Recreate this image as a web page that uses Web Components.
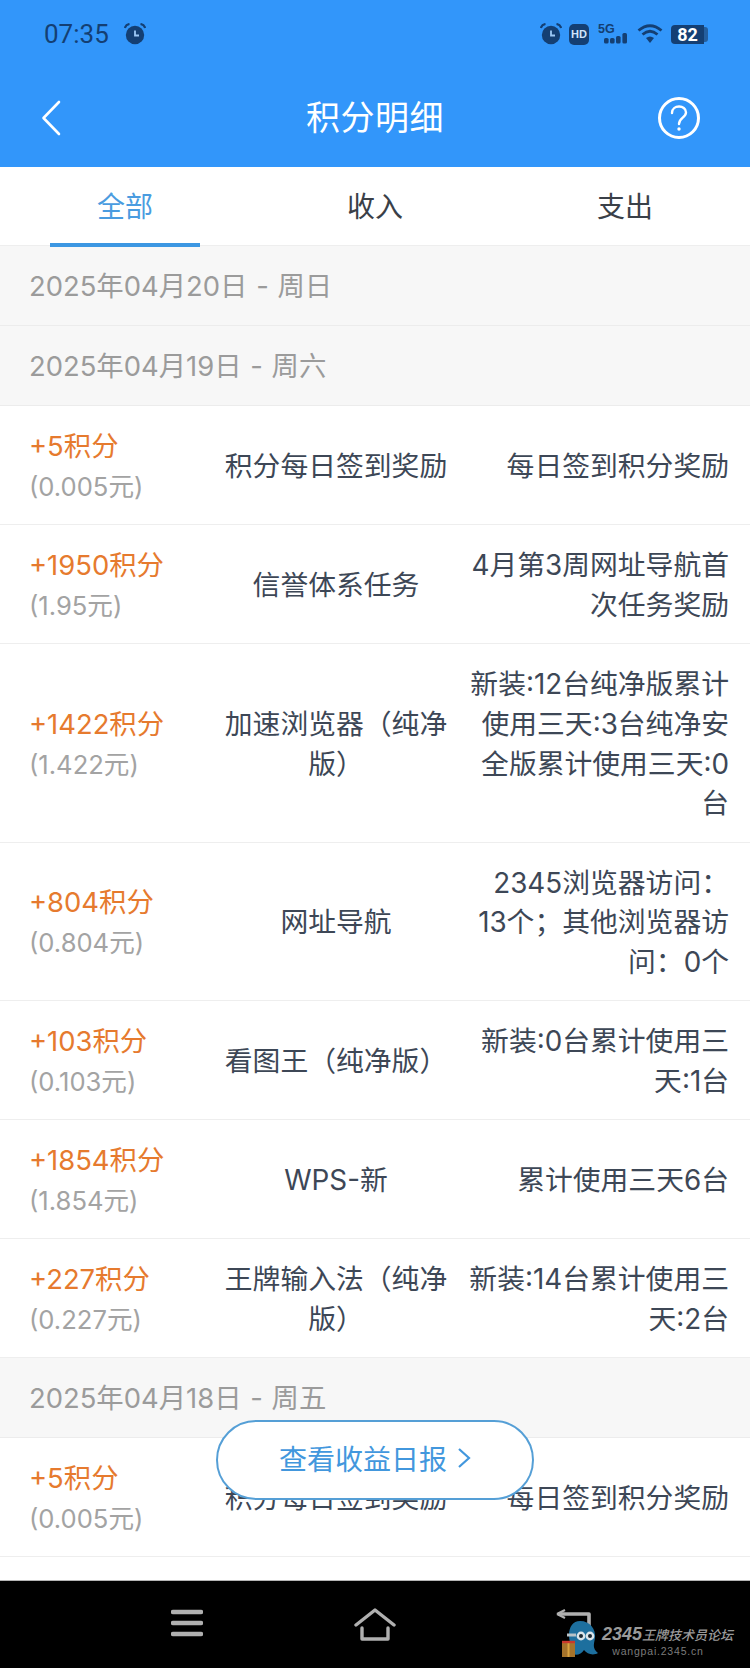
<!DOCTYPE html>
<html lang="zh">
<head>
<meta charset="utf-8">
<title>积分明细</title>
<style>
    html, body { margin: 0; padding: 0; background: #fff; }
    body { font-family: Inter, "Noto Sans CJK SC", sans-serif; }
</style>
</head>
<body>
<points-page>
    <app-header slot="top" title="积分明细"></app-header>
    <tab-bar slot="top"></tab-bar>

    <date-row>2025年04月20日 - 周日</date-row>
    <date-row>2025年04月19日 - 周六</date-row>
    <points-row><span slot="points">+5积分</span><span slot="yuan">(0.005元)</span><span slot="source">积分每日签到奖励</span>每日签到积分奖励</points-row>
    <points-row><span slot="points">+1950积分</span><span slot="yuan">(1.95元)</span><span slot="source">信誉体系任务</span>4月第3周网址导航首次任务奖励</points-row>
    <points-row><span slot="points">+1422积分</span><span slot="yuan">(1.422元)</span><span slot="source">加速浏览器（纯净版）</span>新装:12台纯净版累计使用三天:3台纯净安全版累计使用三天:0台</points-row>
    <points-row><span slot="points">+804积分</span><span slot="yuan">(0.804元)</span><span slot="source">网址导航</span>2345浏览器访问：13个；其他浏览器访问：0个</points-row>
    <points-row><span slot="points">+103积分</span><span slot="yuan">(0.103元)</span><span slot="source">看图王（纯净版）</span>新装:0台累计使用三天:1台</points-row>
    <points-row><span slot="points">+1854积分</span><span slot="yuan">(1.854元)</span><span slot="source">WPS-新</span>累计使用三天6台</points-row>
    <points-row><span slot="points">+227积分</span><span slot="yuan">(0.227元)</span><span slot="source">王牌输入法（纯净版）</span>新装:14台累计使用三天:2台</points-row>
    <date-row>2025年04月18日 - 周五</date-row>
    <points-row><span slot="points">+5积分</span><span slot="yuan">(0.005元)</span><span slot="source">积分每日签到奖励</span>每日签到积分奖励</points-row>

    <report-pill slot="over">查看收益日报</report-pill>
    <nav-bar slot="bottom"></nav-bar>
</points-page>

<script>
/**
 * Alarm clock glyph used twice in the status bar
 * @returns {string}
 */
function alarmIcon() {
    return `<svg width="22" height="22" viewBox="0 0 22 22">
        <circle cx="11" cy="12" r="9.2" fill="#143f73"/>
        <path d="M0.8 5 Q2 1.5 5.5 1 M21.2 5 Q20 1.5 16.5 1" stroke="#143f73" stroke-width="2.2" fill="none"/>
        <path d="M11 7.5 V12.5 H15" stroke="#9cc8f5" stroke-width="1.8" fill="none"/>
    </svg>`;
}

/** Whole screen: fixed top, clipped list, bottom nav */
class PointsPage extends HTMLElement {
    connectedCallback() {
        this.attachShadow({ mode: 'open' }).innerHTML = `
            <style>
                :host {
                    display: flex;
                    flex-direction: column;
                    position: relative;
                    width: 750px;
                    height: 1668px;
                    overflow: hidden;
                    background: #fff;
                }
                .list { flex: 1; min-height: 0; overflow: hidden; }
            </style>
            <slot name="top"></slot>
            <div class="list"><slot></slot></div>
            <slot name="over"></slot>
            <slot name="bottom"></slot>
        `;
    }
}

/** Blue header with status bar and title */
class AppHeader extends HTMLElement {
    connectedCallback() {
        this.attachShadow({ mode: 'open' }).innerHTML = `
            <style>
                :host { display: block; background: #3296fa; height: 167px; }
                .status {
                    height: 68px;
                    padding: 0 42px 0 44px;
                    display: flex;
                    align-items: center;
                    color: #143f73;
                    font: 400 26px Roboto, sans-serif;
                }
                .status .time { margin-right: 15px; }
                .status .right { margin-left: auto; display: flex; align-items: center; }
                .status svg { display: block; }
                .hd {
                    width: 20px; height: 21px; margin: 0 9px 0 7px;
                    border-radius: 5px; background: #143f73; color: #cfe4fb;
                    font: 700 11px/21px "Liberation Sans", sans-serif; text-align: center;
                }
                .batt { display: flex; align-items: center; margin-left: 8px; }
                .batt b {
                    width: 33px; height: 19px; border-radius: 4px 0 0 4px;
                    background: #143f73; color: #fff;
                    font: 700 18px/19px Roboto, sans-serif; text-align: center;
                }
                .batt i { width: 4px; height: 15px; background: #245f9f; border-radius: 0 3px 3px 0; }
                .title {
                    height: 99px;
                    display: grid;
                    grid-template-columns: 1fr auto 1fr;
                    align-items: center;
                    padding: 0 41px;
                    color: #fff;
                    font: 400 34px/40px "Noto Sans CJK SC", sans-serif;
                    letter-spacing: 0.5px;
                }
                .title span { padding-bottom: 4px; }
                .title .help { justify-self: end; margin-right: 8px; }
                .title svg { display: block; }
            </style>
            <div class="status">
                <span class="time">07:35</span>${alarmIcon()}
                <div class="right">
                    ${alarmIcon()}
                    <span class="hd">HD</span>
                    <svg width="30" height="22" viewBox="0 0 30 22">
                        <text x="0" y="10" font-family="Liberation Sans" font-size="12.5" font-weight="700" fill="#143f73">5G</text>
                        <rect x="6" y="15" width="4.6" height="5.5" rx="1.6" fill="#143f73"/>
                        <rect x="12" y="15" width="4.6" height="5.5" rx="1.6" fill="#143f73"/>
                        <rect x="18" y="13" width="4.6" height="7.5" rx="1.6" fill="#143f73"/>
                        <rect x="24.4" y="10" width="4.6" height="10.5" rx="1.6" fill="#143f73"/>
                    </svg>
                    <svg width="26" height="20" viewBox="0 0 26 20" style="margin-left:9px">
                        <path d="M1.5 6.5 Q13 -3 24.5 6.5" stroke="#143f73" stroke-width="2.8" fill="none"/>
                        <path d="M5.5 10.5 Q13 4 20.5 10.5" stroke="#143f73" stroke-width="2.8" fill="none"/>
                        <path d="M9 14 Q13 11 17 14 L13 19 Z" fill="#143f73"/>
                    </svg>
                    <div class="batt"><b>82</b><i></i></div>
                </div>
            </div>
            <div class="title">
                <svg width="20" height="36" viewBox="0 0 20 36">
                    <path d="M18 2 L2.5 18 L18 34" stroke="#fff" stroke-width="2.6" fill="none" stroke-linecap="round" stroke-linejoin="round"/>
                </svg>
                <span>${this.getAttribute('title')}</span>
                <svg class="help" width="44" height="44" viewBox="0 0 44 44">
                    <circle cx="22" cy="22" r="19.5" stroke="#fff" stroke-width="3" fill="none"/>
                    <path d="M15 17 C15 8.5 29 8.5 29 16.5 C29 21.5 22 22 22 28" stroke="#fff" stroke-width="2.4" fill="none" stroke-linecap="round"/>
                    <circle cx="22" cy="33" r="1.7" fill="#fff"/>
                </svg>
            </div>
        `;
    }
}

/** Three equal tabs, first one selected */
class TabBar extends HTMLElement {
    connectedCallback() {
        this.attachShadow({ mode: 'open' }).innerHTML = `
            <style>
                :host {
                    display: grid;
                    grid-template-columns: repeat(3, 1fr);
                    height: 78px;
                    background: #fff;
                    color: #3a4048;
                    font: 400 28px/40px "Noto Sans CJK SC", sans-serif;
                    border-bottom: 1px solid #eeeeee;
                }
                div { display: flex; align-items: center; justify-content: center; position: relative; padding-bottom: 2px; }
                .on { color: #4a9ce0; }
                .on::after {
                    content: '';
                    position: absolute;
                    left: 50px; right: 50px; bottom: -2px;
                    height: 4px;
                    background: #3c97e2;
                }
            </style>
            <div class="on">全部</div>
            <div>收入</div>
            <div>支出</div>
        `;
    }
}

/** Grey band with a day heading */
class DateRow extends HTMLElement {
    connectedCallback() {
        this.attachShadow({ mode: 'open' }).innerHTML = `
            <style>
                :host {
                    display: flex;
                    align-items: center;
                    box-sizing: border-box;
                    height: 80px;
                    padding-left: 29px;
                    background: #f7f7f7;
                    border-bottom: 1px solid #ececec;
                    color: #9b9b9b;
                    font: 400 27.4px/40px Inter, "Noto Sans CJK SC", sans-serif;
                    word-spacing: 1px;
                }
            </style>
            <slot></slot>
        `;
    }
}

/** One ledger line: points + yuan, source, description */
class PointsRow extends HTMLElement {
    connectedCallback() {
        this.attachShadow({ mode: 'open' }).innerHTML = `
            <style>
                :host {
                    display: grid;
                    grid-template-columns: 175px 248px 1fr;
                    column-gap: 8px;
                    align-items: center;
                    padding: 21px 21px 17.5px 29px;
                    background: #fff;
                    border-bottom: 1px solid #eeeeee;
                    color: #3d4756;
                    font: 400 27.8px/39.75px Inter, "Noto Sans CJK SC", sans-serif;
                }
                .amount { display: flex; flex-direction: column; }
                .points { color: #e67a2e; font-size: 27.4px; }
                .yuan { color: #a3a3a3; font-size: 25.6px; }
                .source { text-align: center; }
                .detail { text-align: right; }
            </style>
            <div class="amount">
                <div class="points"><slot name="points"></slot></div>
                <div class="yuan"><slot name="yuan"></slot></div>
            </div>
            <div class="source"><slot name="source"></slot></div>
            <div class="detail"><slot></slot></div>
        `;
    }
}

/** Floating pill over the list */
class ReportPill extends HTMLElement {
    connectedCallback() {
        this.attachShadow({ mode: 'open' }).innerHTML = `
            <style>
                :host {
                    position: absolute;
                    left: 216px;
                    top: 1420px;
                    box-sizing: border-box;
                    width: 318px;
                    height: 80px;
                    padding-bottom: 4px;
                    display: flex;
                    align-items: center;
                    justify-content: center;
                    gap: 10px;
                    background: #fff;
                    border: 2.5px solid #559fd6;
                    border-radius: 40px;
                    color: #4297dd;
                    font: 400 28px/40px "Noto Sans CJK SC", sans-serif;
                }
                svg { display: block; }
            </style>
            <slot></slot>
            <svg width="14" height="22" viewBox="0 0 14 22">
                <path d="M2 2 L12 11 L2 20" stroke="#4297dd" stroke-width="2.2" fill="none"/>
            </svg>
        `;
    }
}

/** Android soft keys, with the forum watermark lying over the back key */
class NavBar extends HTMLElement {
    connectedCallback() {
        this.attachShadow({ mode: 'open' }).innerHTML = `
            <style>
                :host {
                    display: grid;
                    grid-template-columns: repeat(3, 188px);
                    justify-content: center;
                    position: relative;
                    height: 88px;
                    background: #000;
                    border-top: 1px solid #b4b4b4;
                    box-sizing: border-box;
                }
                .key { display: flex; justify-content: center; padding-top: 27px; }
                .key svg { display: block; }
                .mark {
                    position: absolute;
                    left: 602px;
                    top: 43px;
                    width: 134px;
                    color: #9a9a9a;
                    text-align: center;
                }
                .name { font: italic 500 13px/20px "Noto Sans CJK SC", sans-serif; white-space: nowrap; text-align: left; }
                .name b { font: italic 700 18px/20px "Liberation Sans", sans-serif; }
                .url { font: 400 10.5px/12px "Liberation Sans", sans-serif; letter-spacing: 0.8px; color: #7c7c7c; padding-right: 22px; }
                .octo { position: absolute; left: 555px; top: 28px; }
            </style>
            <div class="key">
                <svg width="32" height="30" viewBox="0 0 32 30">
                    <path d="M2 4 H30 M2 15 H30 M2 26 H30" stroke="#b0b0b0" stroke-width="4.4" stroke-linecap="round"/>
                </svg>
            </div>
            <div class="key">
                <svg width="42" height="34" viewBox="0 0 42 34">
                    <path d="M2 17 L21 2 L40 17" stroke="#b0b0b0" stroke-width="3.4" fill="none" stroke-linejoin="round" stroke-linecap="round"/>
                    <path d="M8 20 V31 H34 V20" stroke="#b0b0b0" stroke-width="3.4" fill="none" stroke-linejoin="round" stroke-linecap="round"/>
                </svg>
            </div>
            <div class="key"></div>
            <svg class="octo" width="47" height="50" viewBox="-5 0 47 50">
                <path d="M-2 5 H29 V18" stroke="#b0b0b0" stroke-width="3.6" fill="none" stroke-linejoin="round"/>
                <path d="M-3 5 L5 1 M-3 5 L5 9" stroke="#b0b0b0" stroke-width="2.2" fill="none"/>
                <path d="M20 12 C30 12 36 20 35 29 C34 35 32 39 38 44 C33 47 27 45 24 41 C21 46 15 47 11 44 C14 39 9 36 9 26 C9 18 13 12 20 12 Z" fill="#1d6f9e"/>
                <circle cx="21" cy="27" r="4.4" fill="#d9e4ea"/>
                <circle cx="30" cy="27" r="4.4" fill="#d9e4ea"/>
                <circle cx="21" cy="27" r="2" fill="#1b2a33"/>
                <circle cx="30" cy="27" r="2" fill="#1b2a33"/>
                <path d="M7 26 H16" stroke="#b7c2c8" stroke-width="3"/>
                <rect x="2" y="33" width="13" height="15" fill="#a5732b"/>
                <path d="M8.5 33 V48" stroke="#d9a441" stroke-width="2"/>
                <path d="M2 33 H15" stroke="#c9382c" stroke-width="2.4"/>
            </svg>
            <div class="mark">
                <div class="name"><b>2345</b>王牌技术员论坛</div>
                <div class="url">wangpai.2345.cn</div>
            </div>
        `;
    }
}

customElements.define('points-page', PointsPage);
customElements.define('app-header', AppHeader);
customElements.define('tab-bar', TabBar);
customElements.define('date-row', DateRow);
customElements.define('points-row', PointsRow);
customElements.define('report-pill', ReportPill);
customElements.define('nav-bar', NavBar);
</script>
</body>
</html>
